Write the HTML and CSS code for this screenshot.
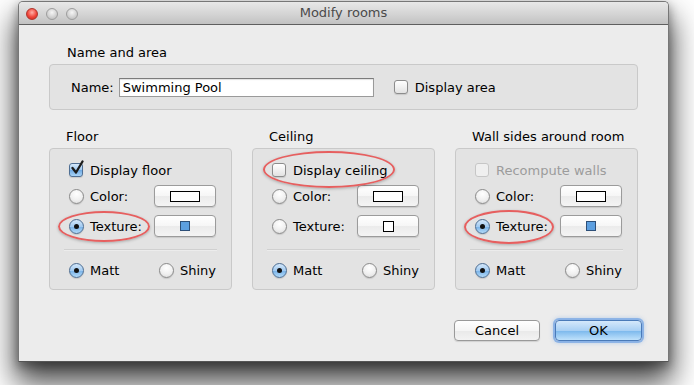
FILE: index.html
```html
<!DOCTYPE html>
<html lang="en">
<head>
    <meta charset="UTF-8">
    <title>Modify rooms</title>
    <link rel="stylesheet" href="styles.css">
</head>
<body>
    <div class="desktop">
    <div class="window">
        <div class="titlebar">
            <div class="lights">
                <span class="light close"></span>
                <span class="light"></span>
                <span class="light"></span>
            </div>
            <div class="title">Modify rooms</div>
            <div></div>
        </div>

        <div class="content">
            <div class="group-label">Name and area</div>
            <div class="box name-box">
                <label class="name-label" for="roomName">Name:</label>
                <input class="field" id="roomName" type="text" value="Swimming Pool">
                <span class="check"></span>
                <span class="check-text">Display area</span>
            </div>

            <div class="sections">
                <div class="section">
                    <div class="group-label">Floor</div>
                    <div class="box panel">
                        <div class="row row-check">
                            <span class="check checked">
                                <svg width="17" height="17" viewBox="0 0 17 17"><path d="M3.5 8 L7 12.5 L13.5 1.5" fill="none" stroke="#1c1c1c" stroke-width="2.3" stroke-linecap="round" stroke-linejoin="round"/></svg>
                            </span>
                            <span class="check-text">Display floor</span>
                        </div>
                        <div class="row row-color">
                            <span class="radio"></span>
                            <span>Color:</span>
                            <button class="swatch-btn"><span class="swatch"></span></button>
                        </div>
                        <div class="row row-texture">
                            <span class="radio on"></span>
                            <span>Texture:</span>
                            <button class="swatch-btn"><span class="tex blue"></span></button>
                        </div>
                        <div class="sep"></div>
                        <div class="row row-finish">
                            <div class="opt"><span class="radio on"></span><span>Matt</span></div>
                            <div class="opt"><span class="radio"></span><span>Shiny</span></div>
                        </div>
                        <div class="mark mark-floor"></div>
                    </div>
                </div>

                <div class="section">
                    <div class="group-label">Ceiling</div>
                    <div class="box panel">
                        <div class="row row-check">
                            <span class="check"></span>
                            <span class="check-text">Display ceiling</span>
                        </div>
                        <div class="row row-color">
                            <span class="radio"></span>
                            <span>Color:</span>
                            <button class="swatch-btn"><span class="swatch"></span></button>
                        </div>
                        <div class="row row-texture">
                            <span class="radio"></span>
                            <span>Texture:</span>
                            <button class="swatch-btn"><span class="tex"></span></button>
                        </div>
                        <div class="sep"></div>
                        <div class="row row-finish">
                            <div class="opt"><span class="radio on"></span><span>Matt</span></div>
                            <div class="opt"><span class="radio"></span><span>Shiny</span></div>
                        </div>
                        <div class="mark mark-ceiling"></div>
                    </div>
                </div>

                <div class="section">
                    <div class="group-label">Wall sides around room</div>
                    <div class="box panel">
                        <div class="row row-check">
                            <span class="check disabled"></span>
                            <span class="check-text disabled-text">Recompute walls</span>
                        </div>
                        <div class="row row-color">
                            <span class="radio"></span>
                            <span>Color:</span>
                            <button class="swatch-btn"><span class="swatch"></span></button>
                        </div>
                        <div class="row row-texture">
                            <span class="radio on"></span>
                            <span>Texture:</span>
                            <button class="swatch-btn"><span class="tex blue"></span></button>
                        </div>
                        <div class="sep"></div>
                        <div class="row row-finish">
                            <div class="opt"><span class="radio on"></span><span>Matt</span></div>
                            <div class="opt"><span class="radio"></span><span>Shiny</span></div>
                        </div>
                        <div class="mark mark-wall"></div>
                    </div>
                </div>
            </div>

            <div class="footer">
                <button class="push">Cancel</button>
                <button class="push default">OK</button>
            </div>
        </div>
    </div>
    </div>
</body>
</html>
```

FILE: styles.css
```css
* {
    box-sizing: border-box;
}

body {
    margin: 0;
    background: #fff;
    font-family: "DejaVu Sans", sans-serif;
    font-size: 13px;
    color: #000;
}

.desktop {
    width: 694px;
    height: 385px;
    padding: 1px 0 0 18px;
    overflow: hidden;
}

.window {
    width: 651px;
    height: 361px;
    background: #ececec;
    border: 1px solid #777;
    border-bottom-color: #555;
    border-radius: 5px 5px 0 0;
    box-shadow: 0 18px 30px 3px rgba(0, 0, 0, 0.72), 0 4px 10px 1px rgba(0, 0, 0, 0.3);
    display: flex;
    flex-direction: column;
}

.titlebar {
    height: 23px;
    display: grid;
    grid-template-columns: 1fr auto 1fr;
    align-items: center;
    background: linear-gradient(#e8e8e8, #d4d4d4 55%, #c2c2c2);
    border-bottom: 1px solid #5f5f5f;
    border-radius: 4px 4px 0 0;
}

.lights {
    display: flex;
    gap: 8px;
    padding-left: 7px;
    padding-top: 1px;
}

.light {
    width: 12px;
    height: 12px;
    border-radius: 50%;
    border: 1px solid #9d9d9d;
    background: radial-gradient(circle at 50% 35%, #f6f6f6, #cfcfcf 60%, #b9b9b9);
}

.light.close {
    border-color: #b0342c;
    background: radial-gradient(circle at 50% 35%, #ffb0a8, #f0463a 55%, #c5241a);
}

.title {
    color: #4a4a4a;
    line-height: 16px;
}

.content {
    padding: 20px 30px 0 30px;
    flex: 1;
    display: flex;
    flex-direction: column;
}

.group-label {
    line-height: 16px;
    padding-left: 18px;
    margin-bottom: 3px;
}

.box {
    background: #e3e3e3;
    border: 1px solid #c9c9c9;
    border-radius: 4px;
}

.name-box {
    height: 46px;
    display: flex;
    align-items: center;
    padding-left: 21px;
}

.name-label {
    margin-right: 5px;
}

.field {
    width: 255px;
    height: 19px;
    border: 1px solid #9a9a9a;
    border-top-color: #7c7c7c;
    background: #fff;
    box-shadow: inset 0 1px 1px rgba(0, 0, 0, 0.12);
    font-family: "DejaVu Sans", sans-serif;
    font-size: 13px;
    padding: 0 3px;
    margin-right: 20px;
}

.check {
    width: 14px;
    height: 14px;
    border: 1px solid #8c8c8c;
    border-radius: 3px;
    background: linear-gradient(#ffffff, #f1f1f1 50%, #e2e2e2);
    box-shadow: 0 1px 1px rgba(0, 0, 0, 0.12);
    margin-right: 7px;
    position: relative;
    flex-shrink: 0;
}

.check.checked {
    border-color: #4f6f94;
    background: linear-gradient(#d6e9fb, #9dc8f0 50%, #6ea9e3 51%, #a8d3f6);
}

.check svg {
    position: absolute;
    left: -1px;
    top: -4px;
}

.check.disabled {
    border-color: #c6c6c6;
    background: #efefef;
    box-shadow: none;
}

.disabled-text {
    color: #9c9c9c;
}

.sections {
    display: grid;
    grid-template-columns: repeat(3, 183px);
    column-gap: 20px;
    margin-top: 19px;
}

.section .group-label {
    padding-left: 17px;
}

.panel {
    height: 142px;
    padding: 0 15px 0 19px;
    position: relative;
}

.row {
    display: flex;
    align-items: center;
}

.row-check {
    height: 18px;
    margin-top: 12px;
}

.row-color {
    height: 22px;
    margin-top: 6px;
}

.row-texture {
    height: 22px;
    margin-top: 8px;
}

.sep {
    height: 2px;
    margin: 12px -1px 0 -5px;
    border-top: 1px solid #d0d0d0;
    border-bottom: 1px solid #ececec;
}

.row-finish {
    display: grid;
    grid-template-columns: 90px 1fr;
    height: 18px;
    margin-top: 10px;
}

.opt {
    display: flex;
    align-items: center;
}

.radio {
    width: 15px;
    height: 15px;
    border-radius: 50%;
    border: 1px solid #8a8a8a;
    background: radial-gradient(circle at 50% 30%, #ffffff, #f0f0f0 55%, #d8d8d8);
    box-shadow: 0 1px 1px rgba(0, 0, 0, 0.12);
    margin-right: 6px;
    flex-shrink: 0;
    display: flex;
    align-items: center;
    justify-content: center;
}

.radio.on {
    border-color: #4c6d92;
    background: linear-gradient(#d3e7fa, #a3cbf1 50%, #77b1e8 51%, #b2daf8);
}

.radio.on::after {
    content: "";
    width: 5px;
    height: 5px;
    border-radius: 50%;
    background: #111;
}

.swatch-btn {
    margin-left: auto;
    width: 62px;
    height: 22px;
    border: 1px solid #9b9b9b;
    border-radius: 4px;
    background: linear-gradient(#ffffff, #f6f6f6 50%, #ebebeb 51%, #f4f4f4);
    box-shadow: 0 1px 1px rgba(0, 0, 0, 0.12);
    display: flex;
    align-items: center;
    justify-content: center;
    padding: 0;
}

.swatch {
    width: 30px;
    height: 11px;
    border: 1px solid #000;
    background: #fff;
}

.tex {
    width: 11px;
    height: 11px;
    border: 1px solid #000;
    background: #fff;
}

.tex.blue {
    width: 10px;
    height: 10px;
    border-color: #2d4f78;
    background: #5c9fe0;
}

.mark {
    position: absolute;
    border: 2.5px solid #e65f5f;
    border-radius: 50%;
    box-shadow: 0 1px 3px rgba(0, 0, 0, 0.25);
    pointer-events: none;
}

.mark-floor {
    left: 8px;
    top: 62px;
    width: 92px;
    height: 31px;
}

.mark-ceiling {
    left: 10px;
    top: 2px;
    width: 132px;
    height: 37px;
}

.mark-wall {
    left: 8px;
    top: 61px;
    width: 90px;
    height: 34px;
}

.footer {
    display: flex;
    justify-content: flex-end;
    gap: 15px;
    margin-top: 30px;
    margin-right: -4px;
}

.push {
    width: 86px;
    height: 21px;
    border: 1px solid #999;
    border-radius: 4px;
    background: linear-gradient(#ffffff, #f5f5f5 50%, #e9e9e9 51%, #f3f3f3);
    box-shadow: 0 1px 1px rgba(0, 0, 0, 0.12);
    font-family: "DejaVu Sans", sans-serif;
    font-size: 13px;
    color: #000;
    padding: 0;
}

.push.default {
    width: 87px;
    border-color: #4a7ab8;
    background: linear-gradient(#d4e8fb, #a9d0f4 50%, #7ab7ec 51%, #bfe1fb);
    box-shadow: 0 0 0 2px rgba(90, 150, 225, 0.55), 0 0 4px 2px rgba(90, 150, 225, 0.35);
}
```
